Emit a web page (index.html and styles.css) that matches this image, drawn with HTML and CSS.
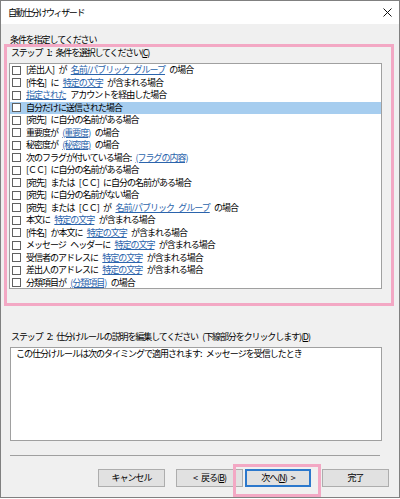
FILE: index.html
```html
<!DOCTYPE html>
<html lang="ja">
<head>
<meta charset="utf-8">
<title>自動仕分けウィザード</title>
<link rel="stylesheet" href="styles.css">
</head>
<body>
<div class="window">
  <div class="titlebar">
    <span class="title">自動仕分けウィザード</span>
    <svg class="close" width="9" height="9" viewBox="0 0 9 9"><path d="M0.5 0.5 L8.5 8.5 M8.5 0.5 L0.5 8.5" stroke="#111" stroke-width="1" fill="none"/></svg>
  </div>
  <div class="heading">条件を指定してください</div>
  <div class="step1">ステップ 1: 条件を選択してください(<u>C</u>)</div>
  <div class="list">
    <div class="row"><span class="cb"></span><span class="txt">[差出人] が <a>名前/パブリック グループ</a> の場合</span></div>
    <div class="row"><span class="cb"></span><span class="txt">[件名] に <a>特定の文字</a> が含まれる場合</span></div>
    <div class="row"><span class="cb"></span><span class="txt"><a>指定された</a> アカウントを経由した場合</span></div>
    <div class="row sel"><span class="cb"></span><span class="txt">自分だけに送信された場合</span></div>
    <div class="row"><span class="cb"></span><span class="txt">[宛先] に自分の名前がある場合</span></div>
    <div class="row"><span class="cb"></span><span class="txt">重要度が <a>(重要度)</a> の場合</span></div>
    <div class="row"><span class="cb"></span><span class="txt">秘密度が <a>(秘密度)</a> の場合</span></div>
    <div class="row"><span class="cb"></span><span class="txt">次のフラグが付いている場合: <a>(フラグの内容)</a></span></div>
    <div class="row"><span class="cb"></span><span class="txt">[ＣＣ] に自分の名前がある場合</span></div>
    <div class="row"><span class="cb"></span><span class="txt">[宛先] または [ＣＣ] に自分の名前がある場合</span></div>
    <div class="row"><span class="cb"></span><span class="txt">[宛先] に自分の名前がない場合</span></div>
    <div class="row"><span class="cb"></span><span class="txt">[宛先] または [ＣＣ] が <a>名前/パブリック グループ</a> の場合</span></div>
    <div class="row"><span class="cb"></span><span class="txt">本文に <a>特定の文字</a> が含まれる場合</span></div>
    <div class="row"><span class="cb"></span><span class="txt">[件名] か本文に <a>特定の文字</a> が含まれる場合</span></div>
    <div class="row"><span class="cb"></span><span class="txt">メッセージ ヘッダーに <a>特定の文字</a> が含まれる場合</span></div>
    <div class="row"><span class="cb"></span><span class="txt">受信者のアドレスに <a>特定の文字</a> が含まれる場合</span></div>
    <div class="row"><span class="cb"></span><span class="txt">差出人のアドレスに <a>特定の文字</a> が含まれる場合</span></div>
    <div class="row"><span class="cb"></span><span class="txt">分類項目が <a>(分類項目)</a> の場合</span></div>
  </div>
  <div class="step2">ステップ 2: 仕分けルールの説明を編集してください (下線部分をクリックします)(<u>D</u>)</div>
  <div class="desc">この仕分けルールは次のタイミングで適用されます: メッセージを受信したとき</div>
  <div class="sep"></div>
  <div class="buttons">
    <button class="btn">キャンセル</button>
    <button class="btn back">&lt; 戻る(<u>B</u>)</button>
    <button class="btn next">次へ(<u>N</u>) &gt;</button>
    <button class="btn finish">完了</button>
  </div>
  <div class="mark mark-list"></div>
  <div class="mark mark-next"></div>
</div>
</body>
</html>
```
FILE: styles.css
```css
html, body {
  margin: 0;
  padding: 0;
}
body {
  width: 400px;
  height: 499px;
  overflow: hidden;
  font-family: "Noto Sans CJK JP", "Noto Sans", sans-serif;
  font-size: 9px;
  letter-spacing: -1px;
  word-spacing: 3.3px;
  color: #000;
}
.window {
  position: relative;
  box-sizing: border-box;
  width: 400px;
  height: 498px;
  border: 1px solid #808080;
  background: #f0f0f0;
  display: flex;
  flex-direction: column;
}
.titlebar {
  height: 23px;
  background: #fff;
  display: flex;
  align-items: center;
  justify-content: space-between;
  padding: 0 7px 0 7px;
  flex: none;
}
.title {
  font-size: 9px;
  line-height: 12px;
  letter-spacing: -1.4px;
}
.close {
  display: block;
  margin-top: -1px;
}
.heading {
  margin: 10px 0 0 9px;
  line-height: 12px;
  letter-spacing: -1.1px;
}
.step1 {
  margin: 1px 0 0 10px;
  line-height: 12px;
  letter-spacing: -1.2px;
}
.list {
  margin: 4px 0 0 8px;
  width: 373px;
  height: 226px;
  box-sizing: border-box;
  border: 1px solid #a0a0a0;
  background: #fff;
  flex: none;
}
.row {
  height: 12.5px;
  display: flex;
  align-items: center;
  padding-left: 2px;
  white-space: nowrap;
}
.row.sel {
  background: #a6cdef;
}
.cb {
  width: 9px;
  height: 9px;
  box-sizing: border-box;
  border: 1px solid #606060;
  background: #fff;
  flex: none;
}
.txt {
  margin-left: 5px;
  line-height: 12px;
}
a {
  color: #2b64ac;
  text-decoration: underline;
}
.step2 {
  margin: 42px 0 0 10px;
  line-height: 12px;
  letter-spacing: -1.1px;
}
.desc {
  margin: 4px 0 0 9px;
  width: 372px;
  height: 94px;
  box-sizing: border-box;
  border: 1px solid #a0a0a0;
  background: #fff;
  padding: 0 0 0 5px;
  line-height: 12px;
  flex: none;
}
.sep {
  margin: 14px 0 0 9px;
  width: 370px;
  height: 1px;
  background: #a0a0a0;
  flex: none;
}
.buttons {
  margin-top: 13px;
  display: flex;
  justify-content: flex-end;
  padding-right: 10px;
}
.btn {
  font: inherit;
  letter-spacing: -1px;
  word-spacing: 3px;
  color: #000;
  width: 67px;
  height: 18px;
  box-sizing: border-box;
  border: 1px solid #adadad;
  background: #e1e1e1;
  padding: 0;
  line-height: 14px;
}
.btn.back {
  margin-left: 11px;
}
.btn.next {
  margin-left: 2px;
  width: 66px;
  border: 2px solid #2c78cc;
}
.btn.finish {
  margin-left: 11px;
}
.mark {
  position: absolute;
  box-sizing: border-box;
  border: 3px solid #f3a8c4;
  pointer-events: none;
}
.mark-list {
  left: 3px;
  top: 43px;
  width: 390px;
  height: 262px;
}
.mark-next {
  left: 232px;
  top: 463px;
  width: 88px;
  height: 33px;
}
```
